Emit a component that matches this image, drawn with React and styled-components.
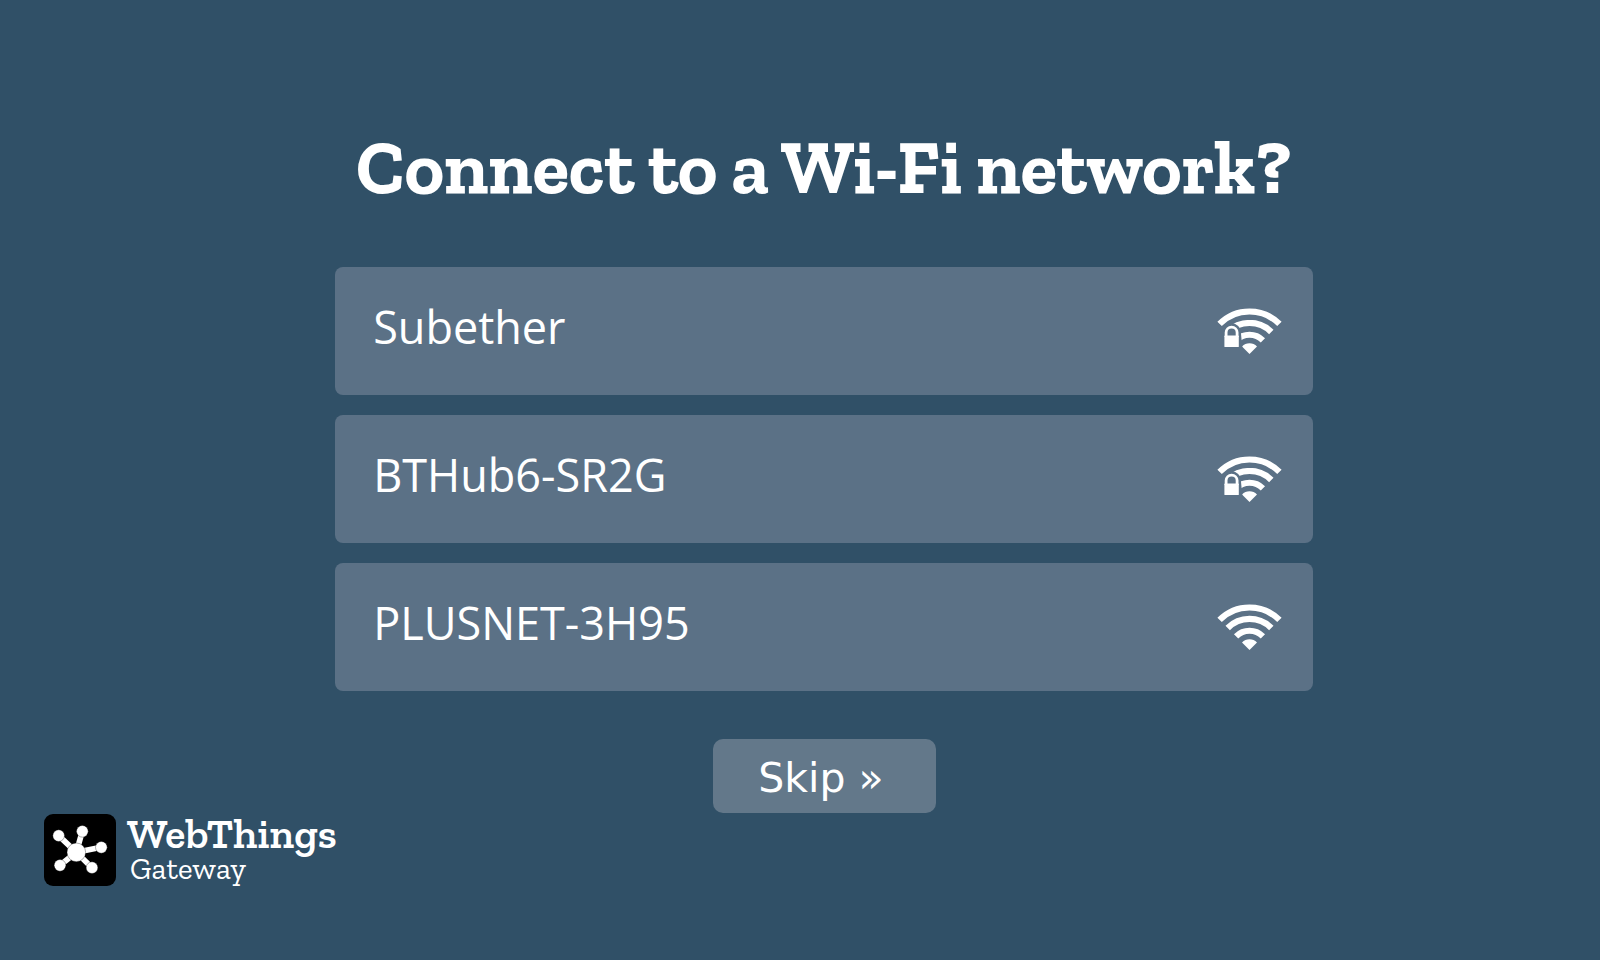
import React from "react";
import styled, { createGlobalStyle } from "styled-components";

const GlobalStyle = createGlobalStyle`
  * { box-sizing: border-box; }
  body {
    margin: 0;
    background: #305067;
    color: #fff;
    font-family: "Open Sans", "Noto Sans", sans-serif;
  }
`;

const slab = `"Zilla Slab", "DejaVu Serif Condensed", "DejaVu Serif", serif`;

const Page = styled.div`
  min-height: 100vh;
  display: flex;
  flex-direction: column;
  padding-top: 127px;
`;

const Main = styled.main`
  display: flex;
  flex-direction: column;
  align-items: center;
  padding: 0 0 1px 48px;
`;

const Title = styled.h1`
  margin: 0 0 60px;
  font-family: ${slab};
  font-weight: 700;
  font-size: 75px;
  line-height: 80px;
  text-align: center;
`;

const NetworkList = styled.ul`
  list-style: none;
  margin: 0 0 48px;
  padding: 0;
  width: 63%;
  min-width: 640px;
  display: flex;
  flex-direction: column;
  gap: 20px;
`;

const NetworkButton = styled.button`
  width: 100%;
  height: 128px;
  display: flex;
  align-items: center;
  justify-content: space-between;
  padding: 0 31px 0 38px;
  border: 0;
  border-radius: 8px;
  background: #5b7186;
  color: inherit;
  font: inherit;
  cursor: pointer;
`;

const NetworkName = styled.span`
  font-size: 45px;
  line-height: 60px;
  padding-bottom: 8px;
`;

const SkipButton = styled.button`
  width: 223px;
  height: 74px;
  padding: 4px 6px 0 0;
  border: 0;
  border-radius: 10px;
  background: #63788a;
  color: inherit;
  font-family: "DejaVu Sans", sans-serif;
  font-size: 41px;
  line-height: 48px;
  cursor: pointer;
`;

const Brand = styled.footer`
  display: flex;
  align-items: center;
  gap: 11px;
  padding-left: 44px;
`;

const BrandText = styled.div`
  display: flex;
  flex-direction: column;
  padding-bottom: 3px;
  font-family: ${slab};
`;

const BrandName = styled.span`
  font-weight: 600;
  font-size: 42px;
  line-height: 40px;
`;

const BrandProduct = styled.span`
  padding-left: 3px;
  font-weight: 400;
  font-size: 31px;
  line-height: 29px;
`;

function WifiIcon({ locked }) {
  return (
    <svg
      width="65"
      height="46"
      viewBox="0 0 65 46"
      role="img"
      aria-label={locked ? "Secured network" : "Open network"}
    >
      <defs>
        <mask id="lock-gap">
          <rect width="65" height="46" fill="#fff" />
          <path d="M5.5 42V24.5a9.2 9.2 0 0 1 18.4 0L25.5 42Z" fill="#000" />
        </mask>
      </defs>
      <path d="M2.6 15.9A42.2 42.2 0 0 1 62.4 15.9" fill="none" stroke="#fff" strokeWidth="6.2" />
      <g mask={locked ? "url(#lock-gap)" : undefined}>
        <path d="M10.7 24A30.7 30.7 0 0 1 54.3 24" fill="none" stroke="#fff" strokeWidth="6.2" />
        <path d="M19.1 32.4A18.9 18.9 0 0 1 45.9 32.4" fill="none" stroke="#fff" strokeWidth="6" />
        <path d="M32.5 45.9L25 38.4A10.6 10.6 0 0 1 40 38.4Z" fill="#fff" />
      </g>
      {locked && (
        <>
          <path d="M9.1 29V24.6a5.5 5.5 0 0 1 11 0V29" fill="none" stroke="#fff" strokeWidth="2.8" />
          <rect x="7.4" y="27.6" width="14.4" height="11.4" rx="0.6" fill="#fff" />
        </>
      )}
    </svg>
  );
}

const nodes = [
  [44, 65],
  [115, 52],
  [172, 100],
  [144, 161],
  [48, 154],
];

function Logo() {
  return (
    <svg width="72" height="72" viewBox="0 0 216 216" aria-hidden="true">
      <rect width="216" height="216" rx="27" fill="#000" />
      {nodes.map(([x, y]) => (
        <line key={`l${x}`} x1="97" y1="115" x2={x} y2={y} stroke="#fff" strokeWidth="17" />
      ))}
      {nodes.map(([x, y]) => (
        <circle key={`c${x}`} cx={x} cy={y} r="17.5" fill="#fff" stroke="#000" strokeWidth="1" />
      ))}
      <circle cx="97" cy="115" r="28" fill="#fff" stroke="#000" strokeWidth="1" />
    </svg>
  );
}

const networks = [
  { ssid: "Subether", locked: true },
  { ssid: "BTHub6-SR2G", locked: true },
  { ssid: "PLUSNET-3H95", locked: false },
];

export default function App() {
  return (
    <Page>
      <GlobalStyle />
      <Main>
        <Title>Connect to a Wi-Fi network?</Title>
        <NetworkList>
          {networks.map(({ ssid, locked }) => (
            <li key={ssid}>
              <NetworkButton type="button">
                <NetworkName>{ssid}</NetworkName>
                <WifiIcon locked={locked} />
              </NetworkButton>
            </li>
          ))}
        </NetworkList>
        <SkipButton type="button">Skip »</SkipButton>
      </Main>
      <Brand>
        <Logo />
        <BrandText>
          <BrandName>WebThings</BrandName>
          <BrandProduct>Gateway</BrandProduct>
        </BrandText>
      </Brand>
    </Page>
  );
}
